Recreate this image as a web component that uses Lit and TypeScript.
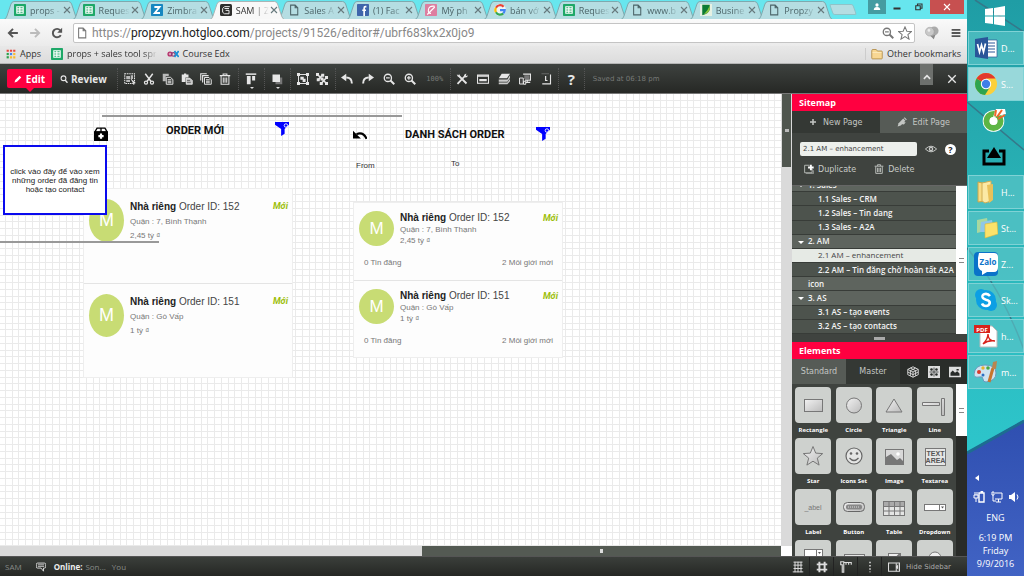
import { LitElement, html, svg, css } from "lit";
import { customElement, state } from "lit/decorators.js";
import { classMap } from "lit/directives/class-map.js";

type Glyph = ReturnType<typeof svg>;

// Line glyphs drawn on a 16 x 16 field in the current text colour.
const glyphs: Record<string, Glyph> = {
  back: svg`<path d="M14.500 8H2.500M8 2.500L2.500 8L8 13.500" fill="none" stroke="currentColor" stroke-width="2.600"/>`,
  forward: svg`<path d="M1.500 8h12M8 2.500L13.500 8L8 13.500" fill="none" stroke="currentColor" stroke-width="2.600"/>`,
  reload: svg`<path d="M13 10.800A5.600 5.600 0 1 1 12.300 4.400" fill="none" stroke="currentColor" stroke-width="2.600"/><path d="M14.800 1v6.500H8.300z" fill="currentColor"/>`,
  page: svg`<path d="M3.500 1.500h6l3.500 3.500v9.500h-9.500zM9.500 1.500V5H13" fill="none" stroke="currentColor" stroke-width="1.400"/>`,
  zoomMinus: svg`<circle cx="6.500" cy="6.500" r="4.800" fill="none" stroke="currentColor" stroke-width="1.800"/><path d="M10 10l5 5" stroke="currentColor" stroke-width="2.600"/><path d="M4 6.500h5" stroke="currentColor" stroke-width="1.600"/>`,
  zoomPlus: svg`<circle cx="6.500" cy="6.500" r="4.800" fill="none" stroke="currentColor" stroke-width="1.800"/><path d="M10 10l5 5" stroke="currentColor" stroke-width="2.600"/><path d="M4 6.500h5M6.500 4v5" stroke="currentColor" stroke-width="1.600"/>`,
  star: svg`<path d="M8 1l2.100 4.900 5.300.4-4.100 3.500 1.300 5.200L8 12.200 3.400 15l1.300-5.200L.6 6.300l5.300-.4z" fill="#fff" stroke="currentColor" stroke-width="1.200"/>`,
  balloons: svg`<circle cx="10.500" cy="5.500" r="5" fill="#aaa"/><circle cx="5.500" cy="6.500" r="5" fill="#c9c9c9" stroke="#999" stroke-width=".6"/><path d="M6 11l4 4 2-5z" fill="#888"/><circle cx="4.500" cy="5" r="1.500" fill="#eee"/>`,
  menu: svg`<path d="M1 3h14M1 8h14M1 13h14" stroke="currentColor" stroke-width="3"/>`,
  folder: svg`<path d="M1 3.500q0-1.500 1.500-1.500H7l1.500 2H14q1 0 1 1v8.500q0 1-1 1H2q-1 0-1-1z" fill="#f8d793" stroke="#a8803a"/><path d="M2 6h12" stroke="#fdeec6"/>`,
  sheet: svg`<rect width="16" height="16" rx="1" fill="#1ea868"/><rect x="3" y="3" width="10" height="10" fill="#fff"/><path d="M4.500 5h2.500M8.500 5h3M4.500 8h2.500M8.500 8h3M4.500 11h2.500M8.500 11h3" stroke="#1ea868" stroke-width="1.500"/>`,
  zimbra: svg`<rect width="16" height="16" rx="1" fill="#1787c0"/><path d="M4.500 4h7L5 12h7" fill="none" stroke="#fff" stroke-width="2.400"/>`,
  hotgloo: svg`<rect width="16" height="16" rx="2" fill="#2e2e2c"/><path d="M13 3.500H6L3.500 6v5L6 13h6V8.500H7.500M6 6h6" fill="none" stroke="#eee" stroke-width="1.300"/>`,
  facebook: svg`<rect width="16" height="16" rx="1" fill="#3f65ab"/><path d="M12.500 3.500h-1.200Q9.500 3.500 9.500 5.500V16M7 8.300h5" fill="none" stroke="#fff" stroke-width="2.200"/>`,
  shop: svg`<rect width="16" height="16" rx="1" fill="#dd7ea0"/><path d="M13 3Q5 2 4.500 8Q4 13 8 12.500M3 14L13 4" fill="none" stroke="#fff" stroke-width="1.500"/>`,
  google: svg`<circle cx="8" cy="8" r="8" fill="#eef6f7"/><g fill="none" stroke-width="3"><path d="M12.800 3.600A6.300 6.300 0 0 0 2.600 5" stroke="#ea4335"/><path d="M2.600 5a6.300 6.300 0 0 0 0 6" stroke="#fbbc05"/><path d="M2.600 11a6.300 6.300 0 0 0 9.800 1.600" stroke="#34a853"/><path d="M12.400 12.600Q14.300 11 14.300 8H8" stroke="#4285f4"/></g>`,
  leaf: svg`<rect width="16" height="16" fill="#e6f1e3"/><path d="M3 1h10v6q-1 6-10 8z" fill="#0c7c35"/><path d="M13 2v5q-1 5-8 7Q11 8 13 2z" fill="#8bc53f"/>`,
  apps: svg`<g><path d="M1 1h3.500v3.500H1zM6.300 1h3.500v3.500H6.300zM11.500 1H15v3.500h-3.500z" fill="#e8453c"/><path d="M1 6.300h3.500v3.500H1z" fill="#2ba24c"/><path d="M6.300 6.300h3.500v3.500H6.300z" fill="#4285f4"/><path d="M11.500 6.300H15v3.500h-3.500z" fill="#f9bb2d"/><path d="M1 11.500h3.500V15H1z" fill="#2ba24c"/><path d="M6.300 11.500h3.500V15H6.300zM11.500 11.500H15V15h-3.500z" fill="#f9bb2d"/></g>`,
  edx: svg`<circle cx="4" cy="8" r="2.600" fill="none" stroke="#b52b67" stroke-width="1.700"/><path d="M2 8h4" stroke="#b52b67"/><circle cx="8.500" cy="8.500" r="2.400" fill="none" stroke="#8c3b75" stroke-width="1.600"/><path d="M10 4l5.500 8M15.500 4L10 12" stroke="#168fd5" stroke-width="2.200"/>`,
  pencil: svg`<path d="M1 15l1.500-5L11 1.500l3.500 3.500L6 13.500z" fill="currentColor"/>`,
  lens: svg`<circle cx="7" cy="6.500" r="4.800" fill="none" stroke="currentColor" stroke-width="2.200"/><path d="M10 10l5 5.500" stroke="currentColor" stroke-width="2.800"/>`,
  select: svg`<rect x="1" y="1" width="13" height="13" fill="none" stroke="currentColor" stroke-width="1.400" stroke-dasharray="2 1"/><path d="M3 4h5v4H3zM9 3h3v5H9zM3 9h5v3H3z" fill="currentColor" opacity=".75"/><path d="M9 8l6 5-3 .3 1.400 2.700" fill="currentColor" stroke="currentColor"/>`,
  cut: svg`<path d="M3 1l7.500 10M13 1L5.500 11" stroke="currentColor" stroke-width="1.900"/><circle cx="4" cy="12.800" r="2.100" fill="none" stroke="currentColor" stroke-width="1.600"/><circle cx="12" cy="12.800" r="2.100" fill="none" stroke="currentColor" stroke-width="1.600"/>`,
  copy: svg`<path d="M1 1h8v3H5v7H1z" fill="currentColor" opacity=".75"/><path d="M5.700 5.700h5.500l3.300 3v6.300H5.700zM7.500 9h5M7.500 11h5M7.500 13h5" fill="none" stroke="currentColor" stroke-width="1.300"/>`,
  paste: svg`<path d="M1 2h3V.6h3V2h3v4H6v6H1z" fill="currentColor"/><path d="M7 7h5l3 3v5H7z" fill="#bbb" stroke="#fff"/><path d="M8 10h4M8 12.500h5" stroke="#555"/>`,
  clone: svg`<path d="M1 10V1h8M3.500 12.500v-9h8" fill="none" stroke="currentColor" stroke-width="1.500"/><path d="M6 6h6l3 3v6H6zM8 9h5M8 11h5M8 13h5" fill="none" stroke="currentColor" stroke-width="1.300"/>`,
  trash: svg`<path d="M1 3.500h14M5.500 3V1.200h5V3M2.800 4v11h10.400V4M5.700 6v7M8 6v7M10.300 6v7" fill="none" stroke="currentColor" stroke-width="1.400"/>`,
  align: svg`<path d="M1 1.500h14" stroke="currentColor" stroke-width="2"/><path d="M2.500 4h5v11h-5zM9.500 4h4v6h-4z" fill="currentColor"/>`,
  layer: svg`<path d="M6 6h9v9H6z" fill="#777"/><path d="M2 2h10v10H2z" fill="currentColor"/>`,
  group: svg`<rect x="2" y="2" width="12" height="12" fill="none" stroke="currentColor" stroke-width="1.300"/><path d="M0 0h4v4H0zM12 0h4v4h-4zM0 12h4v4H0zM12 12h4v4h-4zM4.500 5h4.500v4H4.500zM7.500 7.500h4V12h-4z" fill="currentColor"/>`,
  ungroup: svg`<path d="M0 0h4v4H0zM7 1h4v4H7zM1 7h4v4H1zM6 6h4v4H6zM12 4h4v4h-4zM5 12h4v4H5zM12 12h4v4h-4z" fill="currentColor"/><path d="M2 2l12 12M9 2L3 9M14 6l-7 8" fill="none" stroke="currentColor" stroke-width="2"/>`,
  undo: svg`<path d="M14.500 14q0-8-7.500-8" fill="none" stroke="currentColor" stroke-width="2.600"/><path d="M7 1v10L0 6z" fill="currentColor"/>`,
  redo: svg`<path d="M1.500 14q0-8 7.500-8" fill="none" stroke="currentColor" stroke-width="2.600"/><path d="M9 1v10l7-5z" fill="currentColor"/>`,
  tools: svg`<path d="M2 14.500L12 4M4 4l10 10" stroke="currentColor" stroke-width="2.400"/><path d="M1 2q1 4 4 3.500Q6 2 3.500 1l.5 2zM10.500 3.500q1-3 3.500-2.500l-1 2 1 1 2-1q-1 3.500-3.500 3z" fill="currentColor"/>`,
  form: svg`<rect x=".7" y="2.700" width="14.600" height="11" fill="none" stroke="currentColor" stroke-width="1.400"/><path d="M1 4h14" stroke="currentColor" stroke-width="2"/><path d="M3 8h10v3H3z" fill="currentColor"/>`,
  stack: svg`<path d="M5 1h11l-4 6H1z" fill="currentColor"/><path d="M1 8.500h11.500L16 3v3.500l-3.500 5H1zM1 12.500h11.500L16 8v3l-3.500 4H1z" fill="currentColor" opacity=".85"/>`,
  devices: svg`<path d="M5.500 1.500H15.300v8H8M8 12.500h7M11 10v2" fill="none" stroke="currentColor" stroke-width="1.400"/><path d="M7 3h7v5H7z" fill="#777"/><path d="M.7 6.700h5v8h-5zM6 11h3v4H6z" fill="#444" stroke="currentColor" stroke-width="1.300"/>`,
  clock: svg`<path d="M2 1h10" stroke="#777" fill="none"/><path d="M14 2v12.500H3" fill="none" stroke="currentColor" stroke-width="1.500"/><path d="M7.500 4v6h2.500" stroke="currentColor" stroke-width="1.600" fill="none"/>`,
  cross: svg`<path d="M2 2l12 12M14 2L2 14" stroke="currentColor" stroke-width="2.200"/>`,
  up: svg`<path d="M3 11l5-5 5 5" fill="none" stroke="currentColor" stroke-width="2.600"/>`,
  plus: svg`<path d="M8 2v12M2 8h12" stroke="currentColor" stroke-width="3"/>`,
  editPage: svg`<path d="M1 15l1.500-5L10 2.500 13.500 6 6 13.500z" fill="currentColor"/><path d="M11 1.500l1.200-1.200 3.500 3.500L14.500 5zM9 8l5 .5-3 3.500-4-1" fill="currentColor"/>`,
  eye: svg`<path d="M.5 8Q8 .5 15.500 8Q8 15.500.5 8z" fill="none" stroke="currentColor" stroke-width="1.300"/><circle cx="8" cy="8" r="3" fill="currentColor"/><circle cx="8" cy="8" r="1.200" fill="#333"/>`,
  duplicate: svg`<path d="M9 2H1v12h12V8" fill="none" stroke="currentColor" stroke-width="1.300"/><path d="M3 15.500h12V10" fill="none" stroke="currentColor"/><path d="M11 1v9M6.500 5.500h9" stroke="#fff" stroke-width="3"/>`,
  cube: svg`<path d="M8 1l7 3.500v7L8 15l-7-3.500v-7zM1 4.500L8 8l7-3.500M8 8v7M4.500 2.700l7 3.500v7M11.500 2.700l-7 3.500v7M1 8l7 3.500L15 8" fill="none" stroke="currentColor" stroke-width="1.200"/>`,
  blocks: svg`<path d="M0 0h16v16H0z" fill="currentColor"/><path d="M8 2v12M2 8h12" stroke="#272a28"/><circle cx="4.700" cy="4.700" r="1.700" fill="#272a28"/><circle cx="11.300" cy="4.700" r="1.700" fill="#272a28"/><circle cx="4.700" cy="11.300" r="1.700" fill="#272a28"/><circle cx="11.300" cy="11.300" r="1.700" fill="#272a28"/>`,
  picture: svg`<path d="M0 1h16v14H0z" fill="currentColor"/><path d="M2 13V9l3-3 3 3 3-2 3 3v3z" fill="#272a28"/><path d="M10 4h3v2h-3z" fill="#272a28"/>`,
  chat: svg`<path d="M2.500 1.700h11q2 0 2 2v4q0 2-2 2H12v5l-4-5H2.500q-2 0-2-2v-4q0-2 2-2z" fill="none" stroke="currentColor" stroke-width="1.500"/><path d="M3 4.500h10M3 7h10" stroke="currentColor" stroke-width="1.300"/>`,
  grid: svg`<path d="M2 1.500h12M2 5.500h12M2 10h12M1 14.500h14M4 1v14M8 1v14M12 1v14" stroke="currentColor" stroke-width="1.300"/>`,
  hash: svg`<path d="M4.500 1v14M11.500 1v14M1 4.500h14M1 11.500h14" stroke="currentColor" stroke-width="2.600"/>`,
  ruler: svg`<path d="M1 1h4v14H3V5H1zM5 2h10v3M8 2v3M11.500 2v3" fill="none" stroke="currentColor" stroke-width="1.500"/>`,
  dots: svg`<path d="M8 1v14" stroke="currentColor" stroke-width="2" stroke-dasharray="2 2.300"/>`,
  panel: svg`<path d="M.7 2.700h14.600v11H.7z" fill="none" stroke="currentColor" stroke-width="1.400"/><path d="M11 3v10.500M13 6l-1.500 2L13 10z" stroke="currentColor" fill="currentColor" stroke-width="1.400"/>`,
  box: svg`<path d="M3.500 1.200h9L15 5.500H1zM8 1v4" fill="none" stroke="currentColor" stroke-width="1.500"/><path d="M0 5h16v11H0z" fill="currentColor"/><path d="M8 7.500v6M5 10.500h6" stroke="#fff" stroke-width="2.500"/>`,
  funnel: svg`<path d="M0 0h16v3l-5 5v5.500L7 16V8L0 3z" transform="translate(0 0)" fill="currentColor"/><circle cx="12.500" cy="4" r="2" fill="none" stroke="#fff"/>`,
  returnArrow: svg`<path d="M15.500 12.500Q12 4 4 7" fill="none" stroke="currentColor" stroke-width="2.400"/><path d="M0 3v9h9z" fill="currentColor"/>`,
  user: svg`<circle cx="8" cy="4" r="3.300" fill="currentColor"/><path d="M1.500 14q0-6 6.500-6t6.500 6z" fill="currentColor"/>`,
  restore: svg`<path d="M1.500 5.500h9v8h-9zM5 5V2h9v8.500h-3" fill="none" stroke="currentColor" stroke-width="2.200"/>`,
  minimize: svg`<path d="M1 11h14" stroke="currentColor" stroke-width="4"/>`,
};

// Palette tiles, drawn on a 36 x 36 field.
const shapes: Record<string, Glyph> = {
  Rectangle: svg`<rect x="9.500" y="12.500" width="18" height="12" fill="url(#sh)" stroke="#777"/>`,
  Circle: svg`<circle cx="18" cy="18.500" r="7.500" fill="url(#sh)" stroke="#777"/>`,
  Triangle: svg`<path d="M18 12l8 13H10z" fill="url(#sh)" stroke="#777"/>`,
  Line: svg`<path d="M5.500 15.500h17v3h-17zM24.500 11.500h3v17h-3z" fill="url(#sh)" stroke="#777"/>`,
  Star: svg`<path d="M18 8.500l2.700 6.600 7 .5-5.400 4.500 1.800 7-6.100-3.900-6.100 3.900 1.800-7-5.400-4.500 7-.5z" fill="url(#sh)" stroke="#777"/>`,
  "Icons Set": svg`<circle cx="18" cy="18" r="8" fill="#e4e5e4" stroke="#666" stroke-width="1.200"/><circle cx="15" cy="15.500" r="1.300" fill="#666"/><circle cx="21" cy="15.500" r="1.300" fill="#666"/><path d="M13.500 20q4.500 5 9 0" fill="none" stroke="#666" stroke-width="1.300"/>`,
  Image: svg`<rect x="9.500" y="11.500" width="18" height="15" fill="#d8d8d8" stroke="#777"/><path d="M10 26v-7l5-3 6 6 3-2 3 3v3z" fill="#777"/><circle cx="22" cy="16" r="1.800" fill="#fff"/>`,
  Textarea: svg`<rect x="8.500" y="10.500" width="20" height="17" fill="#e5e6e5" stroke="#777"/><text x="18.500" y="18" class="mini">TEXT</text><text x="18.500" y="25" class="mini">AREA</text>`,
  Label: svg`<text x="18" y="21" class="mini soft">_abel</text>`,
  Button: svg`<rect x="7.500" y="13.500" width="21" height="9" rx="4" fill="url(#sh)" stroke="#666"/><rect x="10" y="15.500" width="16" height="5" rx="2" fill="#888"/><path d="M12 18h12" stroke="#ddd" stroke-dasharray="1 1"/>`,
  Table: svg`<rect x="7.500" y="12.500" width="21" height="14" fill="#e4e5e4" stroke="#777"/><path d="M8 13h20v4H8z" fill="#aaa"/><path d="M7.500 17.500h21M7.500 22h21M13 12.500v14M18.500 12.500v14M24 12.500v14" stroke="#777"/>`,
  Dropdown: svg`<rect x="7.500" y="15.500" width="21" height="6" fill="#fff" stroke="#777"/><path d="M22.500 15.500v6" stroke="#777"/><path d="M24 17.500h3l-1.500 2z" fill="#555"/>`,
  Combo: svg`<rect x="9.500" y="9.500" width="18" height="7" fill="#fff" stroke="#777"/><path d="M21.500 9.500v7M11 20h15v5H11z" stroke="#777" fill="none"/><path d="M23 12h3l-1.500 2z" fill="#555"/>`,
  Input: svg`<rect x="8.500" y="14.500" width="20" height="7" fill="#e5e6e5" stroke="#777"/>`,
  Checkbox: svg`<rect x="12.500" y="13.500" width="12" height="12" fill="#eee" stroke="#777"/><path d="M14 17l4 3 6-6" stroke="#777" fill="none" stroke-width="2"/>`,
  Radio: svg`<circle cx="18" cy="18" r="6" fill="#eee" stroke="#777"/><circle cx="18" cy="18" r="2" fill="#666"/>`,
};

// Desktop task bar pictures, drawn on a 24 x 24 field.
const taskArt: Record<string, Glyph> = {
  word: svg`<path d="M13 4h10v17H13z" fill="#fff" stroke="#2b5797" stroke-width=".7"/><path d="M14 7h7M14 10h7M14 13h7M14 16h7" stroke="#2b5797" stroke-width="1.200"/><path d="M1 3l13-2v22L1 21z" fill="#2a5699"/><path d="M3.500 8l2 8 2-7 2 7 2-8.500" fill="none" stroke="#fff" stroke-width="1.700"/>`,
  chrome: svg`<circle cx="12" cy="12" r="11" fill="#fbd03b"/><path d="M12 12L2.500 6.500A11 11 0 0 0 11 23l5-8z" fill="#2ea44f"/><path d="M12 12L2.500 6.500A11 11 0 0 1 21.500 6.500H12z" fill="#e2392d"/><circle cx="12" cy="12" r="5.200" fill="#fff"/><circle cx="12" cy="12" r="4.200" fill="#3f7fe8"/>`,
  coccoc: svg`<circle cx="11.500" cy="13" r="10.800" fill="#fff"/><circle cx="11.500" cy="13" r="7" fill="none" stroke="#5db544" stroke-width="6"/><circle cx="11.500" cy="13" r="3.800" fill="#fff"/><path d="M11 9L14 1h9l1 5z" fill="#fff"/><path d="M13 8l1-6M15 9l5-7M16 11l7-4" stroke="#f0672c" stroke-width="2"/>`,
  cast: svg`<path d="M7 7H2v13h20V7h-5" fill="none" stroke="#000" stroke-width="3"/><path d="M12 3l7 11H5z" fill="#000"/>`,
  folder: svg`<path d="M4 2l9 2v17l-9 1z" fill="#f7dc86" stroke="#c9a64a"/><path d="M8 3l9-2v20l-6 2-3-2z" fill="#fbe9a5" stroke="#d0ae55"/><path d="M13 5l6-1v16l-4 3z" fill="#e9c15a"/>`,
  notes: svg`<path d="M3 4l10-2 2 12-12 3z" fill="#a8d8a0"/><path d="M7 6l11-2 2 12H6z" fill="#8ec7ea"/><path d="M11 8l12-2 1 12-13 4z" fill="#fbe26a" stroke="#d9b93d" stroke-width=".6"/>`,
  zalo: svg`<rect width="24" height="24" rx="4" fill="#0a73c9"/><path d="M5 1h15q4 0 4 4v10q0 5-4 5h-7l-5 3v-4q-4-2-4-6V6z" fill="#fff"/><text x="14" y="13" class="zalo">Zalo</text>`,
  skype: svg`<circle cx="12" cy="12" r="10" fill="#0c9fe4"/><circle cx="7" cy="7" r="6" fill="#0c9fe4"/><circle cx="17" cy="17" r="6" fill="#0c9fe4"/><path d="M16 8Q14 5.500 11 6Q8 6.500 8.500 9Q9 11 12 11.700Q16 12.500 15.800 15Q15 18 12 18Q9 18 8 15.500" fill="none" stroke="#fff" stroke-width="2.600"/>`,
  pdf: svg`<path d="M6 2h12l5 5v16H6z" fill="#fff" stroke="#bbb"/><path d="M9 20q5-5 5-10q0 7 7 7q-7-1-12 3" fill="none" stroke="#d8221b" stroke-width="1.400"/><path d="M0 1h16v8H0z" fill="#d8221b"/><text x="8" y="7.500" class="pdf">PDF</text>`,
  paint: svg`<path d="M11 5q11 0 11 8t-10 9q-3 0-3-3t-4-2q-5 1-5-3 1-9 11-9z" fill="#cfe3f0" stroke="#6b9bbd"/><circle cx="5" cy="12" r="2" fill="#d83b2b"/><circle cx="9" cy="8" r="1.700" fill="#eab22c"/><circle cx="14" cy="8" r="1.800" fill="#4ba843"/><circle cx="9" cy="15" r="1.500" fill="#2b6fc2"/><path d="M15 22l4-14" stroke="#c8752d" stroke-width="3"/><path d="M18 8l1-6 4-1-1 8z" fill="#b9854f"/>`,
};

const icon = (name: string, cls = "") => html`<svg class="ic ${cls}" viewBox="0 0 16 16" aria-hidden="true">${glyphs[name]}</svg>`;

const tabs = [
  ["sheet", "props -"], ["sheet", "Reques"], ["zimbra", "Zimbra"], ["hotgloo", "SAM | Z"],
  ["page", "Sales A"], ["facebook", "(1) Fac"], ["shop", "Mỹ ph"], ["google", "bán vớ"],
  ["sheet", "Reques"], ["page", "www.b"], ["leaf", "Busine"], ["page", "Propzy"],
];

const tree: Array<[string, "top" | "sub", boolean]> = [
  ["1. Sales", "top", true], ["1.1 Sales – CRM", "sub", false], ["1.2 Sales – Tin dang", "sub", false],
  ["1.3 Sales – A2A", "sub", false], ["2. AM", "top", true], ["2.1 AM – enhancement", "sub", false],
  ["2.2 AM – Tin đăng chờ hoàn tất A2A", "sub", false], ["icon", "top", false], ["3. AS", "top", true],
  ["3.1 AS – tạo events", "sub", false], ["3.2 AS – tạo contacts", "sub", false],
];

const toolGroups: Array<[string, string[]]> = [
  ["", ["select", "cut", "copy", "paste", "clone", "trash"]],
  ["drop", ["align"]], ["drop", ["layer"]], ["", ["group", "ungroup"]],
];

const tasks = [
  ["word", "D..."], ["chrome", "S..."], ["coccoc", ""], ["cast", ""], ["folder", "H..."],
  ["notes", "St..."], ["zalo", "Z..."], ["skype", "Sk..."], ["pdf", "h..."], ["paint", "m..."],
];

@customElement("app-root")
export class AppRoot extends LitElement {
  @state() private page = "2.1 AM – enhancement";

  static styles = css`
    :host { display: flex; height: 100vh; overflow: hidden; font-family: "Open Sans", "Noto Sans", sans-serif; font-size: 9px; color: #333; }
    * { box-sizing: border-box; }
    button { font: inherit; color: inherit; background: none; border: 0; padding: 0; margin: 0; display: flex; align-items: center; justify-content: center; flex: none; }
    a { color: inherit; text-decoration: none; }
    ul { list-style: none; margin: 0; padding: 0; }
    svg { display: block; flex: none; }
    .ic { width: 12px; height: 12px; }
    .s8 { width: 8px; height: 8px; }
    .s10 { width: 10px; height: 10px; }
    .s14 { width: 14px; height: 14px; }
    .browser { flex: 1; min-width: 0; display: flex; flex-direction: column; }

    .tabstrip { height: 19px; flex: none; display: flex; background: #67e6ee; padding-left: 4px; }
    .tabs { flex: 1; display: flex; min-width: 0; }
    .tab { flex: 1; min-width: 0; position: relative; display: flex; align-items: center; padding: 1px 1px 0 10px; font-size: 9px; color: #4c6468; }
    .tab .edge { position: absolute; left: 0; top: 1px; width: calc(100% + 6px); height: 18px; fill: #b5dde2; stroke: #7da9ae; }
    .tab > .ic, .tab span, .tab button { position: relative; }
    .tab > .ic { width: 12px; height: 12px; }
    .tab span { flex: 1; white-space: nowrap; margin-left: 4px; mask-image: linear-gradient(90deg, #000 55%, transparent 100%); }
    .tab.on { z-index: 2; color: #333; }
    .tab.on .edge { fill: #f8f8f8; stroke: #a9b5b6; }
    .tab button { width: 10px; color: #66797c; }
    .wins { width: 140px; display: flex; align-items: flex-start; padding-left: 4px; color: #333; }
    .newtab { width: 24px; height: 11px; margin: 4px 13px 0 0; background: #b5dde2; border: 1px solid #8fc3c8; transform: skewX(20deg); border-radius: 2px; }
    .userb { width: 18px; height: 14px; background: #459ba1; color: #fff; }
    .win { width: 22px; height: 14px; }
    .closeb { width: 34px; height: 14px; background: #c75050; color: #fff; }

    .nav { height: 27px; flex: none; display: flex; align-items: center; gap: 10px; padding: 0 6px 0 7px; background: linear-gradient(#fafafa, #ebebeb); color: #555; }
    .nav .dim { color: #bbb; }
    .omni { flex: 1; min-width: 0; height: 20px; display: flex; align-items: center; gap: 4px; background: #fff; border: 1px solid #c4c4c4; border-radius: 2px; padding: 0 2px; color: #777; }
    .url { flex: 1; overflow: hidden; white-space: nowrap; font-family: Roboto, "Open Sans", sans-serif; font-size: 12px; line-height: 18px; color: #888; }
    .url b { font-weight: 400; color: #222; }
    .nav .right { display: flex; gap: 12px; }
    .marks { height: 18px; flex: none; display: flex; align-items: center; gap: 10px; padding: 0 6px 2px; background: linear-gradient(#e8e8e8, #dcdcdc); border-bottom: 1px solid #b5b5b5; }
    .marks a { display: flex; align-items: center; gap: 4px; white-space: nowrap; line-height: 12px; }
    .marks .other { margin-left: auto; border-left: 1px solid #ccc; padding-left: 5px; }
    .fade { mask-image: linear-gradient(90deg, #000 85%, transparent); }

    .tools { height: 30px; flex: none; display: flex; align-items: center; background: linear-gradient(#3e423f, #262825); border-bottom: 1px solid #777; color: #e6e6e6; }
    .edit { position: relative; width: 45px; height: 19px; margin-left: 7px; gap: 4px; background: #ff0040; border-radius: 2px; color: #fff; font-weight: 700; font-size: 10px; }
    .edit::after { content: ""; position: absolute; left: 18px; top: 18px; border: 5px solid transparent; border-top-color: #ff0040; border-bottom: 0; }
    .review { gap: 3px; margin: 0 10px 0 8px; font-weight: 700; font-size: 10px; }
    .grp { display: flex; height: 22px; align-items: center; padding: 0 3px; border-left: 1px dotted #555; }
    .grp button { width: 19px; height: 20px; }
    .grp .ic { width: 12px; height: 12px; }
    .grp.drop button { position: relative; }
    .grp.drop button::after { content: ""; position: absolute; left: 8px; top: 18px; border: 2px solid transparent; border-top-color: #ddd; border-bottom: 0; }
    .grp.roomy { padding: 0 1px; }
    .grp.roomy button { width: 21px; }
    .pix { font-family: "DejaVu Sans Mono", monospace; font-size: 7px; color: #777a77; width: 28px; text-align: center; }
    .help { font-weight: 700; font-size: 15px; }
    .saved { font-family: "DejaVu Sans", sans-serif; font-size: 7px; color: #777a77; padding-left: 8px; border-left: 1px dotted #555; line-height: 22px; white-space: nowrap; }
    .fold { width: 13px; height: 21px; margin: 0 14px 9px auto; background: #6d706d; padding-top: 6px; }
    .quit { margin-right: 10px; }

    .work { flex: 1; min-height: 0; display: flex; background: #3b3e3b; }
    .stage { flex: 1; min-width: 0; display: grid; grid-template-columns: 1fr 11px; grid-template-rows: 1fr 10px; }
    .canvas { position: relative; overflow: hidden; background-color: #fff; font-family: "Liberation Sans", Arial, sans-serif; }
    .mesh { position: absolute; inset: 0; width: 100%; height: 100%; }
    .vbar { background: #dadada; }
    .vbar i { display: flex; align-items: center; justify-content: center; width: 9px; height: 73px; margin-left: 1px; background: #50564f; }
    .vbar i::before { content: ""; width: 4px; height: 3px; background: #bbb; }
    .hbar { display: flex; justify-content: flex-end; background: #dadada; }
    .hbar i { display: flex; align-items: center; justify-content: center; width: 46%; background: #545a53; }
    .hbar i::before { content: ""; width: 3px; height: 4px; background: #ddd; }
    .corner { background: #fff; }

    .node { position: absolute; }
    .rule { height: 2px; background: #999; }
    .h { font-family: Roboto, "Liberation Sans", sans-serif; font-size: 11px; line-height: 14px; font-weight: 700; color: #111; white-space: nowrap; }
    .t8 { font-size: 8px; line-height: 9px; }
    .note { border: 2px solid #0a0aee; background: #fff; display: flex; align-items: center; justify-content: center; text-align: center; font-size: 8px; line-height: 9px; color: #222; }
    .cards { width: 210px; background: #fdfdfd; border: 1px solid #eee; }
    .card { display: grid; grid-template-columns: 35px 1fr auto; column-gap: 6px; align-content: start; padding: 9px 4px 0 5px; }
    .card + .card { border-top: 1px solid #e4e4e4; }
    .tall .card { height: 94px; padding-top: 10px; }
    .short .card { height: 77px; padding-top: 8px; }
    .av { display: flex; align-items: center; justify-content: center; height: 35px; border-radius: 50%; background: #c8dc74; color: #fff; font-size: 17px; }
    .tall .av { height: 43px; font-size: 18px; }
    .who { font-size: 8px; line-height: 11px; color: #777; white-space: nowrap; }
    .who b { color: #222; }
    .who p { margin: 0; }
    .who .ttl { font-size: 10px; line-height: 13px; color: #444; }
    .tall .who { line-height: 14px; }
    .tall .who .ttl { line-height: 16px; }
    .new { font-family: Roboto, "Liberation Sans", sans-serif; font-size: 9px; line-height: 15px; font-weight: 700; font-style: italic; color: #9dbf0c; }
    .foot { grid-column: 1 / -1; display: flex; justify-content: space-between; padding: 12px 5px 0 5px; font-size: 8px; line-height: 9px; color: #777; }

    .side { width: 175px; flex: none; display: flex; flex-direction: column; background: #3f433f; color: #fff; }
    .bar { margin: 0; height: 17px; flex: none; background: #ff0040; padding-left: 7px; font-size: 9px; line-height: 17px; font-weight: 700; }
    .pair { display: flex; height: 22px; flex: none; font-family: "DejaVu Sans", sans-serif; font-size: 8px; color: #c3c6c3; }
    .pair button { flex: 1; gap: 6px; background: #343834; }
    .pair .lit { background: #565b56; }
    .form { flex: none; height: 53px; padding: 9px 8px 0; background: #3f433f; font-family: "DejaVu Sans", sans-serif; font-size: 8px; color: #c8cbc8; border-bottom: 1px solid #666; }
    .line { display: flex; align-items: center; gap: 8px; }
    .line input { width: 117px; height: 14px; border: 0; border-radius: 2px; background: #edf0ec; color: #444; padding: 0 3px; font: 7px "DejaVu Sans", sans-serif; }
    .line button { gap: 4px; }
    .q { width: 11px; height: 11px; border-radius: 50%; background: #fff; color: #222; font: 700 9px "Open Sans", sans-serif; }
    .acts { margin-top: 8px; padding-left: 4px; gap: 18px; }
    .scroll { display: flex; min-height: 0; }
    .scroll.map { flex: 0 0 148px; overflow: hidden; }
    .tree { flex: 1; min-width: 0; height: calc(100% + 8px); margin-top: -8px; display: grid; grid-auto-rows: 1fr; background: #3a3e3a; }
    .row { display: flex; align-items: center; width: 100%; height: 100%; justify-content: flex-start; padding-left: 26px; background: #4d534d; border-bottom: 1px solid #383c38; font-size: 8px; line-height: 12px; font-weight: 600; color: #f4f4f4; white-space: nowrap; }
    .row.top { position: relative; padding-left: 16px; background: #5e645e; }
    .row.open::before { content: ""; position: absolute; left: 6px; top: 6px; border: 3px solid transparent; border-top-color: #fff; border-bottom: 0; }
    .row.cur { background: #e6eae5; color: #444; font-weight: 400; }
    .thumb { width: 11px; flex: none; display: flex; align-items: center; justify-content: center; background: #fff; }
    .thumb::before { content: ""; width: 5px; height: 3px; border: solid #888; border-width: 1px 0; }
    .grip { height: 8px; flex: none; display: flex; align-items: center; justify-content: center; }
    .grip::before { content: ""; width: 11px; height: 3px; background: #aaa; }
    .kinds { height: 25px; background: #2a2d2a; }
    .kinds .tabk { flex: none; width: 54px; }
    .kinds .mini3 { flex: 1; display: flex; justify-content: space-around; align-items: center; color: #ddd; padding: 0 2px; }
    .kinds .mini3 button { background: none; flex: none; }
    .scroll.pal { flex: 1; overflow: hidden; }
    .rail { background: #292b28; width: 11px; flex: none; }
    .rail .thumb { height: 52px; }
    .tiles { flex: 1; display: grid; grid-template-columns: repeat(4, 1fr); grid-auto-rows: 51px; column-gap: 4px; padding: 3px 3px 0; }
    .tiles button { flex-direction: column; justify-content: flex-start; font-size: 6px; line-height: 14px; font-weight: 700; white-space: nowrap; }
    .tiles svg { width: 36px; height: 36px; background: #ced1ce; border-radius: 4px; }
    .mini { font: 700 7px "Liberation Sans", sans-serif; text-anchor: middle; fill: #555; }
    .soft { font-weight: 400; fill: #777; }

    .status { height: 20px; flex: none; display: flex; align-items: center; background: linear-gradient(#3b3f3b, #252724); color: #888b88; font-size: 8px; padding-left: 5px; border-top: 1px solid #555; }
    .status .ic { color: #ddd; }
    .status .chat { margin: 0 8px 0 14px; width: 10px; height: 10px; }
    .status b { color: #eee; margin-right: 3px; }
    .status .you { margin-left: 6px; }
    .view { width: 181px; margin-left: auto; display: flex; align-items: center; font-family: "DejaVu Sans", sans-serif; font-size: 7px; color: #aaa; }
    .view button { width: 24px; height: 19px; border-right: 1px solid #222; }
    .view .hide { width: auto; border: 0; gap: 6px; margin-left: 6px; }

    .task { width: 57px; flex: none; position: relative; display: flex; flex-direction: column; background: #28b1b6; color: #fff; }
    .wall { position: absolute; inset: 0; width: 100%; height: 100%; }
    .start, .apps, .tray { position: relative; }
    .start { height: 31px; padding-right: 2px; }
    .start svg { width: 20px; height: 20px; }
    .apps button { width: 56px; height: 34px; margin: 0 0 2px 1px; padding-left: 5px; justify-content: flex-start; gap: 3px; font-size: 9px; }
    .apps .run { background: #5cc4c8aa; border: 1px solid #7fd2d5; }
    .apps .bare { padding-left: 14px; }
    .apps .now { background: #98d8da; }
    .apps svg { width: 24px; height: 24px; }
    .zalo { font: 700 8px "Open Sans", sans-serif; fill: #0a73c9; text-anchor: middle; }
    .pdf { font: 700 6px "Open Sans", sans-serif; fill: #fff; text-anchor: middle; }
    .tray { margin-top: auto; padding-bottom: 6px; text-align: center; font-size: 9px; line-height: 13px; }
    .tray p { margin: 0; }
    .tray .lang { margin: 8px 0 7px; }
    .tray .more { width: 20px; height: 14px; }
    .tray .row3 { display: flex; justify-content: space-between; padding: 6px 4px 0 6px; }
  `;

  private card(id: string, where: string, price: string, foot: boolean) {
    return html`<article class="card">
      <div class="av">M</div>
      <div class="who"><p class="ttl"><b>Nhà riêng</b> Order ID: ${id}</p><p>Quận : ${where}</p><p>${price} ₫</p></div>
      <div class="new">Mới</div>
      ${foot ? html`<div class="foot"><span>0 Tin đăng</span><span>2 Môi giới mới</span></div>` : ""}
    </article>`;
  }

  private tool = (name: string) => html`<button aria-label=${name}>${icon(name)}</button>`;

  render() {
    return html`
      <div class="browser">
        <div class="tabstrip">
          <div class="tabs">
            ${tabs.map(([fav, text], i) => html`<div class=${classMap({ tab: true, on: i === 3 })}>
              <svg class="edge" viewBox="0 0 75 18" preserveAspectRatio="none"><path d="M0 18.500Q2 18 3 15L7 3Q8 .5 10 .5H65Q67 .5 68 3L72 15Q73 18 75 18.500"/></svg>
              ${icon(fav)}<span>${text}</span><button aria-label="Close tab">${icon("cross", "s8")}</button>
            </div>`)}
          </div>
          <div class="wins">
            <button class="newtab" aria-label="New tab"></button>
            <button class="userb" aria-label="Profile">${icon("user", "s8")}</button>
            <button class="win" aria-label="Minimize">${icon("minimize", "s8")}</button>
            <button class="win" aria-label="Restore">${icon("restore", "s8")}</button>
            <button class="closeb" aria-label="Close">${icon("cross", "s8")}</button>
          </div>
        </div>
        <nav class="nav">
          <button aria-label="Back">${icon("back")}</button>
          <button class="dim" aria-label="Forward">${icon("forward")}</button>
          <button aria-label="Reload">${icon("reload")}</button>
          <div class="omni">${icon("page")}<div class="url">https://<b>propzyvn.hotgloo.com</b>/projects/91526/editor#/ubrf683kx2x0jo9</div>
            ${icon("zoomMinus")}${icon("star", "s14")}</div>
          <div class="right">${icon("balloons", "s14")}<button aria-label="Menu">${icon("menu", "s10")}</button></div>
        </nav>
        <div class="marks">
          <a href="#">${icon("apps", "s10")}Apps</a>
          <a href="#">${icon("sheet")}<span class="fade">props + sales tool spr</span></a>
          <a href="#">${icon("edx")}Course Edx</a>
          <a class="other" href="#">${icon("folder")}Other bookmarks</a>
        </div>
        <header class="tools">
          <button class="edit">${icon("pencil", "s8")}Edit</button>
          <button class="review">${icon("lens", "s8")}Review</button>
          ${toolGroups.map(([k, names]) => html`<div class="grp ${k}">${names.map(this.tool)}</div>`)}
          <div class="grp roomy">${["undo", "redo", "zoomMinus", "zoomPlus"].map(this.tool)}<span class="pix">100%</span></div>
          <div class="grp roomy">${["tools", "form", "stack", "devices", "clock"].map(this.tool)}</div>
          <div class="grp"><button class="help">?</button></div>
          <span class="saved">Saved at 06:18 pm</span>
          <button class="fold" aria-label="Collapse">${icon("up", "s10")}</button>
          <button class="quit" aria-label="Close editor">${icon("cross", "s10")}</button>
        </header>
        <div class="work">
          <main class="stage">
            <div class="canvas">
              <svg class="mesh"><defs><pattern id="mesh" x="-2" y="-1" width="27" height="27" patternUnits="userSpaceOnUse">
                <path d="M.5 0v27M7.500 0v27M14.500 0v27M20.500 0v27M0 .5h27M0 7.500h27M0 14.500h27M0 20.500h27" stroke="#eaeaea" /></pattern></defs>
                <rect width="100%" height="100%" fill="url(#mesh)"/></svg>
              <div class="node cards tall" style="left:83px;top:94px">
                ${this.card("152", "7, Bình Thạnh", "2,45 tỷ", false)}${this.card("151", "Gò Vấp", "1 tỷ", false)}
              </div>
              <div class="node cards short" style="left:353px;top:108px">
                ${this.card("152", "7, Bình Thạnh", "2,45 tỷ", true)}${this.card("151", "Gò Vấp", "1 tỷ", true)}
              </div>
              <div class="node rule" style="left:102px;top:21px;width:300px"></div>
              <div class="node rule" style="left:0;top:147px;width:159px"></div>
              <div class="node" style="left:94px;top:33px;color:#000">${icon("box", "s14")}</div>
              <div class="node h" style="left:166px;top:30px">ORDER MỚI</div>
              <div class="node" style="left:275px;top:28px;color:#00f">${icon("funnel", "s14")}</div>
              <div class="node note" style="left:3px;top:51px;width:104px;height:70px">click vào đây để vào xem những order đã đăng tin hoặc tạo contact</div>
              <div class="node" style="left:353px;top:34px;color:#000">${icon("returnArrow", "s14")}</div>
              <div class="node h" style="left:405px;top:34px">DANH SÁCH ORDER</div>
              <div class="node" style="left:536px;top:33px;color:#00f">${icon("funnel", "s14")}</div>
              <div class="node t8" style="left:356px;top:67px">From</div>
              <div class="node t8" style="left:451px;top:65px">To</div>
            </div>
            <div class="vbar"><i></i></div>
            <div class="hbar"><i></i></div>
            <div class="corner"></div>
          </main>
          <aside class="side">
            <h2 class="bar">Sitemap</h2>
            <div class="pair"><button>${icon("plus", "s8")}New Page</button><button class="lit">${icon("editPage", "s10")}Edit Page</button></div>
            <div class="form">
              <div class="line"><input aria-label="Page name" .value=${this.page} />
                <button aria-label="Show page">${icon("eye")}</button><button class="q">?</button></div>
              <div class="line acts"><button>${icon("duplicate", "s10")}Duplicate</button><button>${icon("trash", "s10")}Delete</button></div>
            </div>
            <div class="scroll map">
              <ul class="tree">
                ${tree.map(([name, kind, open]) => html`<li><button @click=${() => (this.page = name)}
                  class=${classMap({ row: true, top: kind === "top", open, cur: name === this.page })}>${name}</button></li>`)}
              </ul>
              <div class="thumb"></div>
            </div>
            <div class="grip"></div>
            <h2 class="bar">Elements</h2>
            <div class="pair kinds">
              <button class="tabk lit">Standard</button><button class="tabk">Master</button>
              <div class="mini3">${["cube", "blocks", "picture"].map(this.tool)}</div>
            </div>
            <div class="scroll pal">
              <div class="tiles">
                ${Object.entries(shapes).map(([name, art]) => html`<button>
                  <svg viewBox="0 0 36 36"><defs><linearGradient id="sh" x2="1" y2="1"><stop stop-color="#f2f2f2"/><stop offset="1" stop-color="#bbb"/></linearGradient></defs>${art}</svg>${name}</button>`)}
              </div>
              <div class="rail"><div class="thumb"></div></div>
            </div>
          </aside>
        </div>
        <footer class="status">
          <span>SAM</span>${icon("chat", "chat")}<b>Online:</b><span>Son...</span><span class="you">You</span>
          <div class="view">${["grid", "hash", "ruler", "dots"].map(this.tool)}<button class="hide">${icon("panel")}Hide Sidebar</button></div>
        </footer>
      </div>
      <aside class="task">
        <svg class="wall" viewBox="0 0 57 576" preserveAspectRatio="none">
          <defs><linearGradient id="sea" x2="0" y2="1"><stop stop-color="#1f9da5"/><stop offset=".4" stop-color="#2bb5b8"/><stop offset=".78" stop-color="#2dc5cb"/></linearGradient>
          <linearGradient id="sky" x2="0" y2="1"><stop stop-color="#2f4fb0"/><stop offset="1" stop-color="#4163c4"/></linearGradient></defs>
          <path d="M0 0h57v576H0z" fill="url(#sea)"/><path d="M0 452L57 420V576H0z" fill="url(#sky)"/>
          <path d="M8 0L57 32M0 102L57 150M0 248Q35 290 57 350" fill="none" stroke="#35788a" stroke-width="1.500"/>
          <path d="M0 453L57 421" stroke="#1d6d90" stroke-width="3"/>
        </svg>
        <button class="start" aria-label="Start"><svg viewBox="0 0 20 20"><path d="M0 3l8-1v7.500H0zM9 2l11-2v9.500H9zM0 10.500h8V18l-8-1zM9 10.500h11V20L9 18.200z" fill="#fff"/></svg></button>
        <div class="apps">${tasks.map(([name, text]) => html`<button aria-label=${name}
          class=${classMap({ run: text !== "", bare: text === "", now: name === "chrome" })}><svg viewBox="0 0 24 24">${taskArt[name]}</svg>${text}</button>`)}</div>
        <div class="tray">
          <button class="more" aria-label="Hidden icons"><svg width="4" height="6" viewBox="0 0 4 6"><path d="M4 0v6L0 3z" fill="#fff"/></svg></button>
          <div class="row3">
            <svg width="12" height="12" viewBox="0 0 12 12"><path d="M2 1v3M4 1v3M1 4h4v3H1zM3 7v4" stroke="#fff" fill="none"/><path d="M6 2h5v9H6zM7.500.5h2v1" fill="none" stroke="#fff" stroke-width="1.400"/></svg>
            <svg width="12" height="12" viewBox="0 0 12 12"><path d="M4 2h7v6H4M5 11h5M7.500 8v3M1 1h2v3H1zM2 4v6h3" fill="none" stroke="#fff"/></svg>
            <svg width="12" height="12" viewBox="0 0 12 12"><path d="M1 4h2l4-3v10L3 8H1z" fill="#fff"/><path d="M9 3.500q2 2.500 0 5" fill="none" stroke="#fff"/></svg>
          </div>
          <p class="lang">ENG</p><p>6:19 PM</p><p>Friday</p><p>9/9/2016</p>
        </div>
      </aside>`;
  }
}
